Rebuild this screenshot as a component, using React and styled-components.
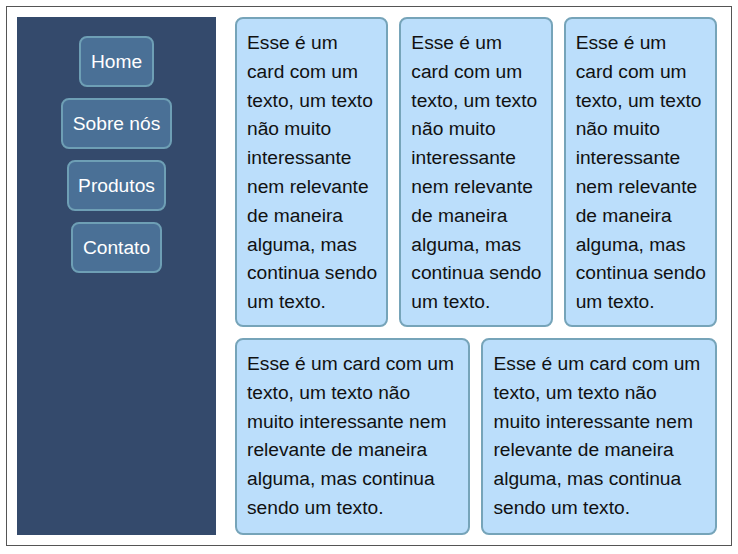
import styled, { createGlobalStyle } from "styled-components";

const GlobalStyle = createGlobalStyle`
  * { box-sizing: border-box; }
  body {
    margin: 6px;
    font-family: "Liberation Sans", Arial, sans-serif;
    background: #fff;
  }
`;

const Page = styled.div`
  width: 726px;
  height: 540px;
  display: flex;
  gap: 19px;
  padding: 10px 14px 10px 10px;
  border: 1px solid #555;
  box-shadow: 1px 1px 1px rgba(0, 0, 0, 0.35);
`;

const Sidebar = styled.nav`
  width: 199px;
  flex-shrink: 0;
  background: #344a6c;
  display: flex;
  flex-direction: column;
  align-items: center;
  gap: 11px;
  padding-top: 19px;
`;

const NavButton = styled.a`
  display: block;
  padding: 12.5px 9.6px;
  border: 2px solid #6e9fb5;
  border-radius: 8px;
  background: #4a7096;
  color: #fff;
  font-size: 19.2px;
  line-height: normal;
  text-decoration: none;
  cursor: pointer;
`;

const Cards = styled.main`
  flex: 1;
  display: grid;
  grid-template-columns: repeat(6, 1fr);
  grid-template-rows: auto 1fr;
  gap: 11px;
`;

const Card = styled.div`
  grid-column: span ${(p) => p.$span};
  background: #bbdefb;
  border: 2px solid #76a4b9;
  border-radius: 8px;
  padding: 10px 8px 8px 10px;
  color: #111;
  font-size: 19.2px;
  line-height: 1.5;
`;

const text =
  "Esse é um card com um texto, um texto não muito interessante nem relevante de maneira alguma, mas continua sendo um texto.";

export default function App() {
  const links = ["Home", "Sobre nós", "Produtos", "Contato"];
  return (
    <>
      <GlobalStyle />
      <Page>
        <Sidebar>
          {links.map((l) => (
            <NavButton key={l}>{l}</NavButton>
          ))}
        </Sidebar>
        <Cards>
          <Card $span={2}>{text}</Card>
          <Card $span={2}>{text}</Card>
          <Card $span={2}>{text}</Card>
          <Card $span={3}>{text}</Card>
          <Card $span={3}>{text}</Card>
        </Cards>
      </Page>
    </>
  );
}
